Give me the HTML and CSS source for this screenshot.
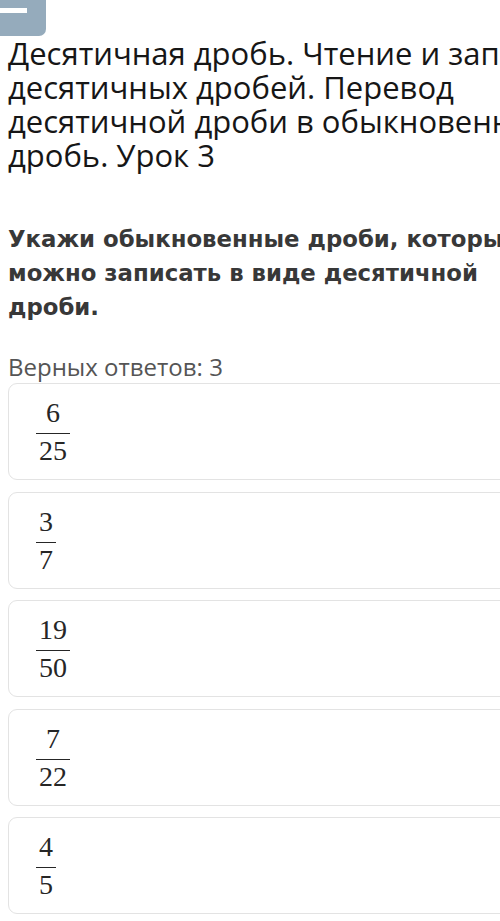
FILE: index.html
```html
<!DOCTYPE html>
<html lang="ru">
<head>
  <meta charset="UTF-8" />
  <meta name="viewport" content="width=device-width, initial-scale=1.0"/>
  <title>Десятичная дробь. Урок 3</title>
  <link rel="stylesheet" href="styles.css">
</head>
<body>

  <div class="menu-btn">
    <span class="menu-line"></span>
  </div>

  <div class="lesson">
    <h1 class="lesson-title">Десятичная дробь. Чтение и запись десятичных дробей. Перевод десятичной дроби в обыкновенную дробь. Урок 3</h1>

    <p class="question">Укажи обыкновенные дроби, которые можно записать в виде десятичной дроби.</p>

    <p class="answers-count">Верных ответов: 3</p>

    <ul class="options">
      <li class="option">
        <span class="frac"><span class="num">6</span><span class="den">25</span></span>
      </li>
      <li class="option">
        <span class="frac"><span class="num">3</span><span class="den">7</span></span>
      </li>
      <li class="option">
        <span class="frac"><span class="num">19</span><span class="den">50</span></span>
      </li>
      <li class="option">
        <span class="frac"><span class="num">7</span><span class="den">22</span></span>
      </li>
      <li class="option">
        <span class="frac"><span class="num">4</span><span class="den">5</span></span>
      </li>
    </ul>
  </div>

</body>
</html>
```

FILE: styles.css
```css
* {
  box-sizing: border-box;
}

body {
  margin: 0;
  padding: 0;
  background: #fff;
  font-family: 'Open Sans', 'Noto Sans', sans-serif;
  overflow: hidden;
}

.menu-btn {
  width: 46px;
  height: 36px;
  background: #95abbc;
  border-bottom-right-radius: 7px;
  padding-top: 8px;
}

.menu-line {
  display: block;
  width: 27px;
  height: 5px;
  background: #fff;
}

.lesson {
  width: 556px;
  padding-left: 8px;
}

.lesson-title {
  width: 590px;
  margin: 0;
  font-size: 31px;
  font-weight: normal;
  line-height: 34px;
  color: #161616;
}

.question {
  margin: 50px 0 0;
  font-family: 'DejaVu Sans', sans-serif;
  font-size: 22.8px;
  font-weight: bold;
  line-height: 34px;
  color: #383838;
}

.answers-count {
  margin: 28px 0 0;
  font-size: 24px;
  line-height: 30px;
  color: #555;
}

.options {
  list-style: none;
  margin: 1px 0 0;
  padding: 0;
}

.option {
  border: 1.5px solid #e3e3e3;
  border-radius: 9px;
  padding: 14px 0 13px 27px;
  margin-bottom: 11.5px;
}

.frac {
  display: inline-flex;
  flex-direction: column;
  align-items: center;
  font-family: 'Liberation Serif', 'DejaVu Serif', serif;
  font-size: 28px;
  line-height: 30px;
  color: #262626;
}

.frac .num {
  padding: 0 3px;
}

.frac .den {
  width: 100%;
  text-align: center;
  padding: 0 3px;
  margin-top: 5px;
  padding-top: 2px;
  border-top: 1.5px solid #262626;
}
```
